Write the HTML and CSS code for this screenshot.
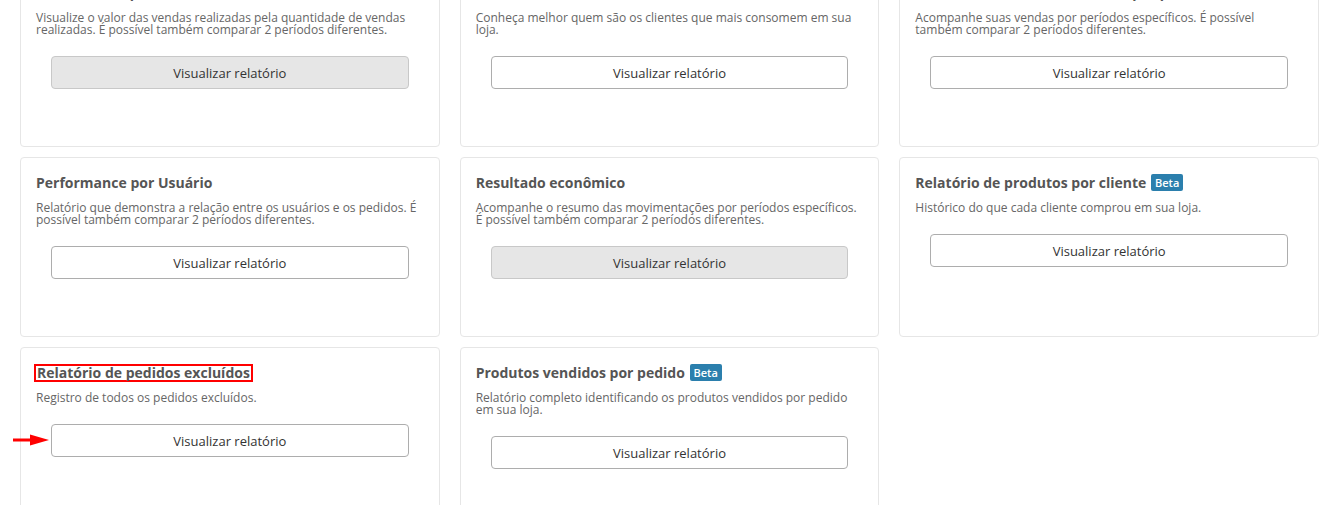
FILE: index.html
```html
<!DOCTYPE html>
<html lang="pt-BR">
<head>
<meta charset="utf-8">
<title>Relatórios</title>
<link rel="stylesheet" href="styles.css">
</head>
<body>
<main class="reports">
  <section class="card">
    <h3 class="card-title">Ticket médio por venda</h3>
    <p class="card-desc">Visualize o valor das vendas realizadas pela quantidade de vendas realizadas. É possível também comparar 2 períodos diferentes.</p>
    <div class="card-action"><button class="btn btn-active">Visualizar relatório</button></div>
  </section>
  <section class="card">
    <h3 class="card-title">Melhores clientes</h3>
    <p class="card-desc">Conheça melhor quem são os clientes que mais consomem em sua loja.</p>
    <div class="card-action"><button class="btn">Visualizar relatório</button></div>
  </section>
  <section class="card">
    <h3 class="card-title">Relatório de vendas realizadas por período</h3>
    <p class="card-desc">Acompanhe suas vendas por períodos específicos. É possível também comparar 2 períodos diferentes.</p>
    <div class="card-action"><button class="btn">Visualizar relatório</button></div>
  </section>

  <section class="card">
    <h3 class="card-title">Performance por Usuário</h3>
    <p class="card-desc">Relatório que demonstra a relação entre os usuários e os pedidos. É possível também comparar 2 períodos diferentes.</p>
    <div class="card-action"><button class="btn">Visualizar relatório</button></div>
  </section>
  <section class="card">
    <h3 class="card-title">Resultado econômico</h3>
    <p class="card-desc">Acompanhe o resumo das movimentações por períodos específicos. É possível também comparar 2 períodos diferentes.</p>
    <div class="card-action"><button class="btn btn-active">Visualizar relatório</button></div>
  </section>
  <section class="card">
    <h3 class="card-title">Relatório de produtos por cliente <span class="badge">Beta</span></h3>
    <p class="card-desc">Histórico do que cada cliente comprou em sua loja.</p>
    <div class="card-action"><button class="btn">Visualizar relatório</button></div>
  </section>

  <section class="card">
    <h3 class="card-title"><span class="highlight">Relatório de pedidos excluídos</span></h3>
    <p class="card-desc">Registro de todos os pedidos excluídos.</p>
    <div class="card-action">
      <svg class="pointer-arrow" width="37" height="12" viewBox="0 0 37 12" aria-hidden="true">
        <rect x="0" y="4.5" width="20" height="3" fill="#f00"/>
        <polygon points="17,0.5 36,6 17,11.5" fill="#f00"/>
      </svg>
      <button class="btn">Visualizar relatório</button>
    </div>
  </section>
  <section class="card">
    <h3 class="card-title">Produtos vendidos por pedido <span class="badge">Beta</span></h3>
    <p class="card-desc">Relatório completo identificando os produtos vendidos por pedido em sua loja.</p>
    <div class="card-action"><button class="btn">Visualizar relatório</button></div>
  </section>
</main>
</body>
</html>
```

FILE: styles.css
```css
* { box-sizing: border-box; }

html, body {
  margin: 0;
  background: #fff;
}

body {
  font-family: "Open Sans", "Noto Sans", "Liberation Sans", sans-serif;
  color: #555;
  overflow: hidden;
}

.reports {
  display: grid;
  grid-template-columns: repeat(3, 1fr);
  gap: 10px 20px;
  padding: 0 10px 0 20px;
  margin-top: -33px;
}

.card {
  height: 180px;
  border: 1px solid #e6e6e6;
  border-radius: 4px;
  padding: 15px 15px;
  background: #fff;
}

.card-title {
  margin: 0 0 9px;
  font-size: 14px;
  font-weight: 700;
  line-height: 20px;
  color: #555;
  white-space: nowrap;
}

.badge {
  display: inline-block;
  vertical-align: 1px;
  background: #2b7fad;
  color: #fff;
  font-size: 11px;
  font-weight: 600;
  line-height: 17px;
  padding: 0 4px;
  border-radius: 2px;
  margin-left: 1px;
}

.highlight {
  display: inline-block;
  border: 2px solid #f00;
  line-height: 14px;
  padding: 0 1px;
  margin-left: -2px;
}

.card-desc {
  margin: 0 0 20px;
  font-size: 12px;
  line-height: 12px;
  color: #666;
}

.card-action {
  position: relative;
  padding: 0 15px;
}

.btn {
  display: block;
  width: 100%;
  height: 33px;
  font-family: inherit;
  font-size: 13px;
  color: #333;
  background: #fff;
  border: 1px solid #adadad;
  border-radius: 4px;
  padding: 0;
  cursor: pointer;
}

.btn-active {
  background: #e6e6e6;
  border-color: #c8c8c8;
}

.pointer-arrow {
  position: absolute;
  left: -23px;
  top: 10px;
}
```
